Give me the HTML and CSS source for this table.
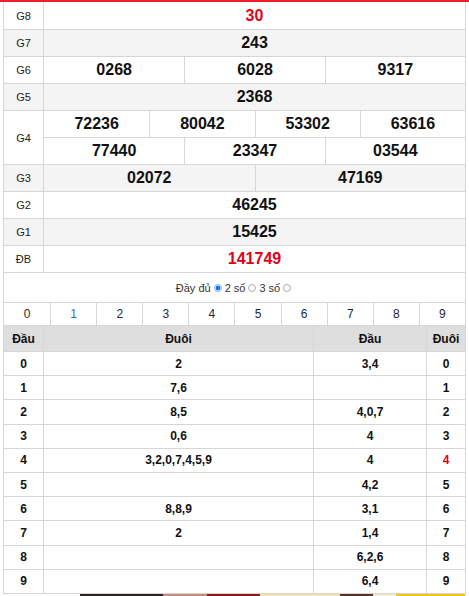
FILE: index.html
```html
<!DOCTYPE html>
<html>
<head>
<meta charset="utf-8">
<link rel="stylesheet" href="styles.css">
</head>
<body>
<div class="topbar"></div>
<div class="wrap">
  <div class="kq">
    <div class="row r1"><div class="lbl">G8</div><div class="vals n1"><div class="v red">30</div></div></div>
    <div class="row alt"><div class="lbl">G7</div><div class="vals n1"><div class="v">243</div></div></div>
    <div class="row"><div class="lbl">G6</div><div class="vals n3"><div class="v">0268</div><div class="v">6028</div><div class="v">9317</div></div></div>
    <div class="row alt"><div class="lbl">G5</div><div class="vals n1"><div class="v">2368</div></div></div>
    <div class="row g4"><div class="lbl">G4</div>
      <div class="subs">
        <div class="vals n4 sub"><div class="v">72236</div><div class="v">80042</div><div class="v">53302</div><div class="v">63616</div></div>
        <div class="vals n3"><div class="v">77440</div><div class="v">23347</div><div class="v">03544</div></div>
      </div>
    </div>
    <div class="row alt"><div class="lbl">G3</div><div class="vals n2"><div class="v">02072</div><div class="v">47169</div></div></div>
    <div class="row"><div class="lbl">G2</div><div class="vals n1"><div class="v">46245</div></div></div>
    <div class="row alt"><div class="lbl">G1</div><div class="vals n1"><div class="v">15425</div></div></div>
    <div class="row"><div class="lbl">ĐB</div><div class="vals n1"><div class="v red">141749</div></div></div>
  </div>

  <div class="opts">
    <span>Đầy đủ</span><span class="radio on"></span><span>2 số</span><span class="radio"></span><span>3 số</span><span class="radio"></span>
  </div>

  <div class="digits">
    <div class="d first">0</div><div class="d blue">1</div><div class="d">2</div><div class="d">3</div><div class="d">4</div>
    <div class="d">5</div><div class="d">6</div><div class="d">7</div><div class="d">8</div><div class="d">9</div>
  </div>

  <div class="loto">
    <div class="lr head"><div>Đầu</div><div>Đuôi</div><div>Đầu</div><div>Đuôi</div></div>
    <div class="lr"><div>0</div><div>2</div><div>3,4</div><div>0</div></div>
    <div class="lr"><div>1</div><div>7,6</div><div></div><div>1</div></div>
    <div class="lr"><div>2</div><div>8,5</div><div>4,0,7</div><div>2</div></div>
    <div class="lr"><div>3</div><div>0,6</div><div>4</div><div>3</div></div>
    <div class="lr"><div>4</div><div>3,2,0,7,4,5,9</div><div>4</div><div class="red">4</div></div>
    <div class="lr"><div>5</div><div></div><div>4,2</div><div>5</div></div>
    <div class="lr"><div>6</div><div>8,8,9</div><div>3,1</div><div>6</div></div>
    <div class="lr"><div>7</div><div>2</div><div>1,4</div><div>7</div></div>
    <div class="lr"><div>8</div><div></div><div>6,2,6</div><div>8</div></div>
    <div class="lr"><div>9</div><div></div><div>6,4</div><div>9</div></div>
  </div>
</div>
<div class="strip">
  <span class="s1"></span><span class="s2"></span><span class="s3"></span><span class="s4"></span><span class="s5"></span><span class="s6"></span><span class="s7"></span>
</div>
</body>
</html>
```

FILE: styles.css
```css
* { box-sizing: border-box; }
html, body { margin: 0; padding: 0; background: #fff; }
body { font-family: "Liberation Sans", Arial, sans-serif; color: #222; }

.topbar { height: 2px; background: #ec2027; }

.wrap {
  margin-left: 3px;
  width: 463px;
  border-left: 1px solid #d6d6d6;
  border-right: 1px solid #d6d6d6;
}

.row {
  display: grid;
  grid-template-columns: 40px 1fr;
  height: 27px;
  border-bottom: 1px solid #d6d6d6;
}
.row.r1 { height: 28px; }
.row.g4 { height: 54px; }
.row.alt { background: #f4f4f4; }

.lbl {
  border-right: 1px solid #d6d6d6;
  display: flex;
  align-items: center;
  justify-content: center;
  font-size: 11px;
  color: #222;
}

.vals { display: grid; height: 100%; }
.n1 { grid-template-columns: 1fr; }
.n2 { grid-template-columns: 1fr 1fr; }
.n3 { grid-template-columns: 1fr 1fr 1fr; }
.n4 { grid-template-columns: 1fr 1fr 1fr 1fr; }

.v {
  display: flex;
  align-items: center;
  justify-content: center;
  font-size: 16px;
  font-weight: bold;
  color: #111;
}
.vals .v + .v { border-left: 1px solid #d6d6d6; }
.red { color: #e3001b !important; }

.subs { display: grid; grid-template-rows: 27px 26px; }
.sub { border-bottom: 1px solid #d6d6d6; }

.opts {
  height: 29px;
  display: flex;
  align-items: center;
  justify-content: center;
  font-size: 11px;
  color: #333;
  gap: 1px;
  padding-top: 1px;
}
.radio {
  display: inline-block;
  width: 8px;
  height: 8px;
  border-radius: 50%;
  border: 1px solid #aaa;
  background: #fff;
  margin: 0 2px;
}
.radio.on {
  border: 1px solid #7fb2ef;
  background: radial-gradient(circle, #1a73e8 0 2.3px, #fff 2.6px);
}

.digits {
  display: grid;
  grid-template-columns: repeat(10, 1fr);
  height: 24px;
  border-top: 1px solid #d6d6d6;
  border-bottom: 1px solid #d6d6d6;
}
.d {
  display: flex;
  align-items: center;
  justify-content: center;
  font-size: 12px;
  color: #1c2540;
}
.d + .d { border-left: 1px solid #d6d6d6; }
.d.first { color: #2e2a22; }
.d.blue { color: #1f6fc5; }

.lr {
  display: grid;
  grid-template-columns: 39px 270px 113px 1fr;
  height: 24.2px;
  border-bottom: 1px solid #d6d6d6;
}
.lr > div {
  display: flex;
  align-items: center;
  justify-content: center;
  font-size: 12px;
  font-weight: bold;
  color: #111;
}
.lr > div + div { border-left: 1px solid #d6d6d6; }
.lr.head { height: 26px; background: #dedede; }

.strip { display: flex; height: 3px; margin-left: 80px; }
.strip span { display: block; height: 3px; }
.s1 { width: 83px; background: #2b2222; }
.s2 { width: 44px; background: #c98a7a; }
.s3 { width: 53px; background: #8a1c1c; }
.s4 { width: 80px; background: #f2e2b0; }
.s5 { width: 33px; background: #5a3224; }
.s6 { width: 23px; background: #f1ead0; }
.s7 { width: 69px; background: #f3c21a; }
```
